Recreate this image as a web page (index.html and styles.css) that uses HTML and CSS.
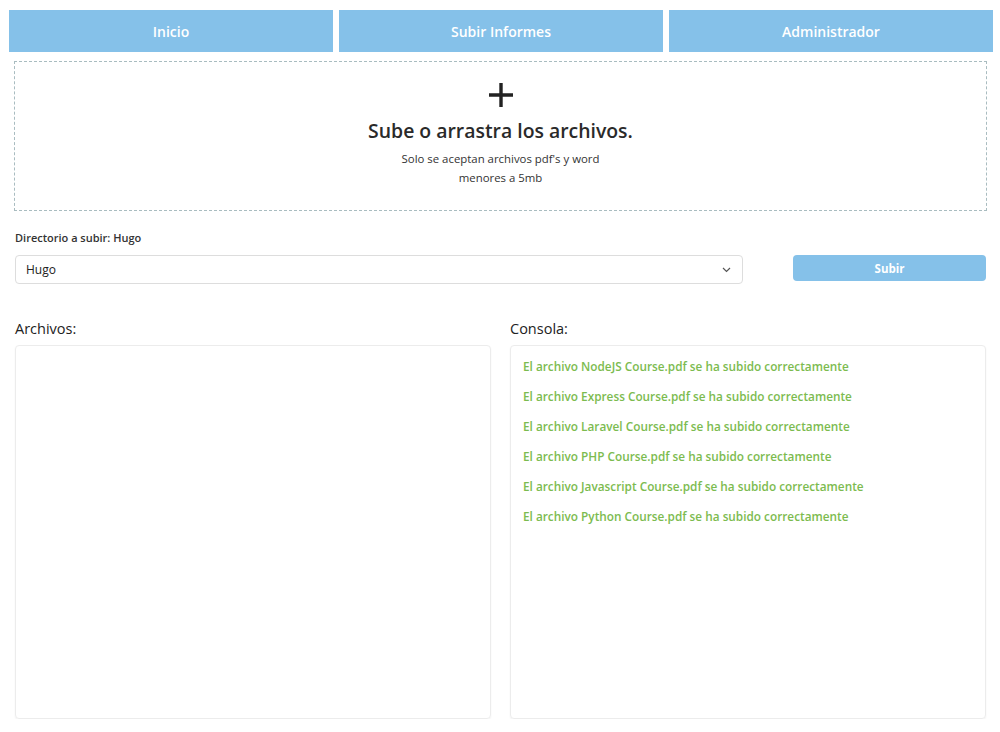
FILE: index.html
```html
<!DOCTYPE html>
<html lang="es">
<head>
<meta charset="utf-8">
<title>Subir Informes</title>
<link rel="stylesheet" href="styles.css">
</head>
<body>
<nav class="nav">
  <a class="nav-btn">Inicio</a>
  <a class="nav-btn">Subir Informes</a>
  <a class="nav-btn">Administrador</a>
</nav>
<main class="content">
  <section class="dropzone">
    <svg class="plus" width="26" height="26" viewBox="0 0 26 26"><path d="M13 1v24M1 13h24" stroke="#222" stroke-width="3.4" fill="none"/></svg>
    <h2 class="drop-title">Sube o arrastra los archivos.</h2>
    <p class="drop-sub">Solo se aceptan archivos pdf's y word<br>menores a 5mb</p>
  </section>
  <div class="dir-label">Directorio a subir: Hugo</div>
  <div class="form-row">
    <div class="select">
      <span>Hugo</span>
      <svg width="9" height="6" viewBox="0 0 9 6"><path d="M1 1l3.5 3.5L8 1" stroke="#555" stroke-width="1.2" fill="none"/></svg>
    </div>
    <button class="submit">Subir</button>
  </div>
  <div class="panels">
    <div class="panel">
      <div class="panel-title">Archivos:</div>
      <div class="panel-box"></div>
    </div>
    <div class="panel">
      <div class="panel-title">Consola:</div>
      <div class="panel-box console">
        <p class="ok">El archivo NodeJS Course.pdf se ha subido correctamente</p>
        <p class="ok">El archivo Express Course.pdf se ha subido correctamente</p>
        <p class="ok">El archivo Laravel Course.pdf se ha subido correctamente</p>
        <p class="ok">El archivo PHP Course.pdf se ha subido correctamente</p>
        <p class="ok">El archivo Javascript Course.pdf se ha subido correctamente</p>
        <p class="ok">El archivo Python Course.pdf se ha subido correctamente</p>
      </div>
    </div>
  </div>
</main>
</body>
</html>
```
FILE: styles.css
```css
* { box-sizing: border-box; }
body {
  margin: 0;
  background: #fff;
  font-family: "Open Sans", "Noto Sans", sans-serif;
  color: #222;
}
.nav {
  display: flex;
  gap: 6px;
  padding: 10px 7px 0 9px;
}
.nav-btn {
  flex: 1;
  height: 42px;
  background: #85c1e9;
  color: #fff;
  font-weight: 600;
  font-size: 14px;
  display: flex;
  align-items: center;
  justify-content: center;
}
.content {
  padding: 9px 13px 0 14px;
}
.dropzone {
  height: 150px;
  border: 1px dashed #a9bcc0;
  display: flex;
  flex-direction: column;
  align-items: center;
  padding-top: 20px;
}
.plus { display: block; }
.drop-title {
  margin: 10px 0 0;
  font-size: 19.4px;
  font-weight: 600;
  color: #2a2a2a;
  line-height: 26px;
}
.drop-sub {
  margin: 5px 0 0;
  font-size: 11.4px;
  line-height: 19px;
  text-align: center;
  color: #333;
}
.dir-label {
  margin: 19px 0 0 1px;
  font-size: 11px;
  font-weight: 600;
  color: #333;
}
.form-row {
  display: flex;
  align-items: flex-start;
  margin: 10px 0 0 1px;
  gap: 50px;
}
.select {
  width: 728px;
  height: 29px;
  border: 1px solid #ddd;
  border-radius: 4px;
  display: flex;
  align-items: center;
  justify-content: space-between;
  padding: 0 11px 0 10px;
  font-size: 12px;
  color: #222;
}
.submit {
  width: 193px;
  height: 26px;
  border: none;
  border-radius: 4px;
  background: #85c1e9;
  color: #fff;
  font-family: inherit;
  font-weight: 700;
  font-size: 11.5px;
}
.panels {
  display: flex;
  gap: 19px;
  margin: 35px 0 0 1px;
}
.panel { width: 476px; }
.panel-title {
  font-size: 14.5px;
  line-height: 20px;
  color: #222;
}
.panel-box {
  margin-top: 6px;
  height: 374px;
  border: 1px solid #ececec;
  border-radius: 4px;
  box-shadow: 0 1px 2px rgba(0,0,0,0.06);
}
.console { padding: 12px 12px; }
.ok {
  margin: 0 0 13px;
  font-size: 11.8px;
  line-height: 17px;
  font-weight: 600;
  color: #7cbb4f;
}
```
